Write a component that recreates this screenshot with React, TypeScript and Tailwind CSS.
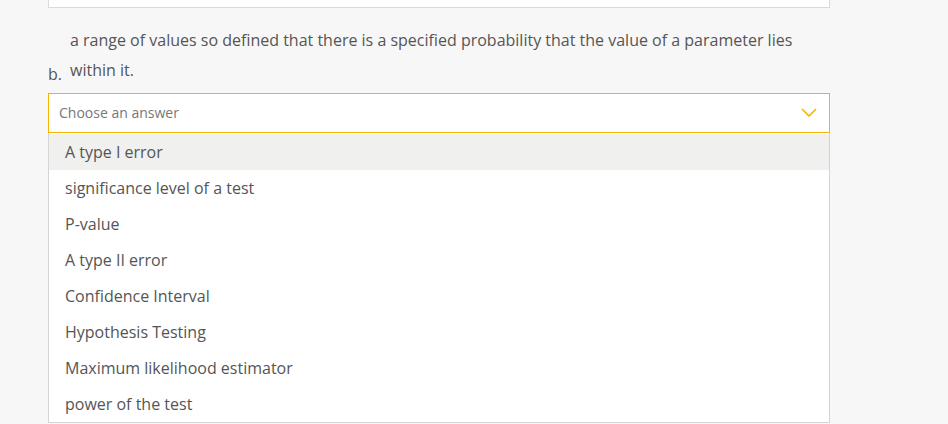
const options = [
  'A type I error',
  'significance level of a test',
  'P-value',
  'A type II error',
  'Confidence Interval',
  'Hypothesis Testing',
  'Maximum likelihood estimator',
  'power of the test',
];

export default function App() {
  return (
    <div
      className="min-h-[424px] w-[948px] bg-[#f7f7f7] text-[#555]"
      style={{ fontFamily: '"Open Sans", "Noto Sans", sans-serif' }}
    >
      <div className="ml-[48px] w-[782px]">
        <div className="h-[8px] border border-t-0 border-[#dadada] bg-white" />

        <div className="mt-[17px] flex">
          <span className="w-[22px] self-end text-[16px] leading-[21px]">b.</span>
          <p className="text-[16px] leading-[30px]">
            a range of values so defined that there is a specified probability that the value of a parameter lies
            <br />
            within it.
          </p>
        </div>

        <div className="mt-[8px] flex h-[40px] items-center justify-between border border-[#f5b400] bg-white pb-[2px] pl-[10px] pr-[12px]">
          <span className="text-[14px] text-[#777]">Choose an answer</span>
          <svg width="16" height="9" viewBox="0 0 16 9" fill="none" aria-hidden>
            <path d="M1 1l7 7 7-7" stroke="#f5b400" strokeWidth="1.6" />
          </svg>
        </div>

        <ul className="border border-t-0 border-[#d4d4d4] bg-white pt-[1px]">
          {options.map((o, i) => (
            <li
              key={o}
              className={`flex h-[36px] items-center px-[16px] text-[16px] ${i === 0 ? 'bg-[#f0f0ef]' : ''}`}
            >
              {o}
            </li>
          ))}
        </ul>
      </div>
    </div>
  );
}
